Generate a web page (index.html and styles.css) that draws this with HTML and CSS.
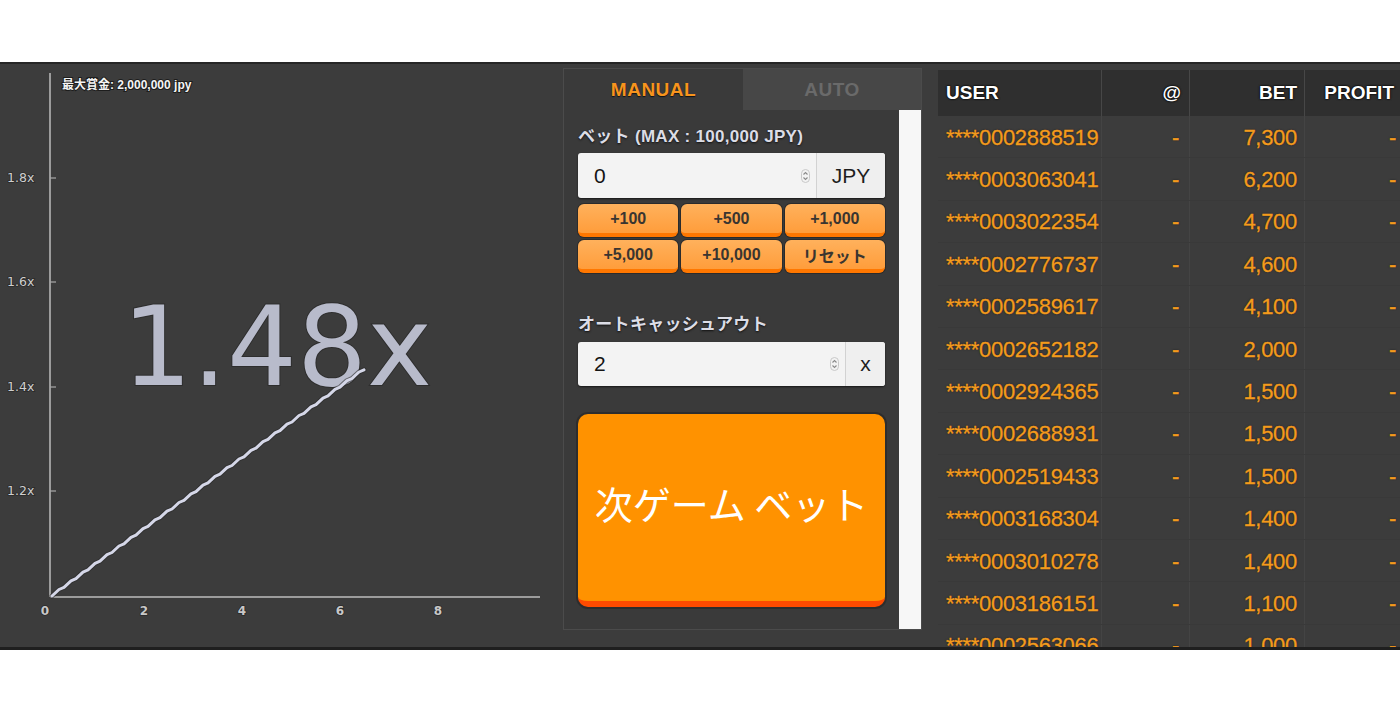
FILE: index.html
```html
<!DOCTYPE html>
<html lang="ja">
<head>
<meta charset="utf-8">
<title>Crash</title>
<link rel="stylesheet" href="styles.css">
</head>
<body>
<div class="app">
  <div class="chart">
    <svg width="560" height="583" viewBox="0 0 560 583">
      <text class="cap" x="62" y="25">最大賞金: 2,000,000 jpy</text>
      <line class="axis" x1="50" y1="9" x2="50" y2="533"/>
      <line class="axis" x1="50" y1="533" x2="540" y2="533"/>
      <line class="tick" x1="50" y1="114" x2="56" y2="114"/>
      <line class="tick" x1="50" y1="218" x2="56" y2="218"/>
      <line class="tick" x1="50" y1="323" x2="56" y2="323"/>
      <line class="tick" x1="50" y1="427" x2="56" y2="427"/>
      <text class="lbl" x="7" y="118">1.8x</text>
      <text class="lbl" x="7" y="222">1.6x</text>
      <text class="lbl" x="7" y="327">1.4x</text>
      <text class="lbl" x="7" y="431">1.2x</text>
      <text class="lbl mid" x="45" y="551">0</text>
      <text class="lbl mid" x="144" y="551">2</text>
      <text class="lbl mid" x="242" y="551">4</text>
      <text class="lbl mid" x="340" y="551">6</text>
      <text class="lbl mid" x="438" y="551">8</text>
      <text class="big" x="122" y="321">1.48x</text>
      <path class="curve-halo" d="M52 532 l7 -6.5 l5 -2.2 l7 -6.5 l5 -2.2 l7 -6.5 l5 -2.2 l7 -6.5 l5 -2.2 l7 -6.5 l5 -2.2 l7 -6.5 l5 -2.2 l7 -6.5 l5 -2.2 l7 -6.5 l5 -2.2 l7 -6.5 l5 -2.2 l7 -6.5 l5 -2.2 l7 -6.5 l5 -2.2 l7 -6.5 l5 -2.2 l7 -6.5 l5 -2.2 l7 -6.5 l5 -2.2 l7 -6.5 l5 -2.2 l7 -6.5 l5 -2.2 l7 -6.5 l5 -2.2 l7 -6.5 l5 -2.2 l7 -6.5 l5 -2.2 l7 -6.5 l5 -2.2 l7 -6.5 l5 -2.2 l7 -6.5 l5 -2.2 l7 -6.5 l5 -2.2 l7 -6.5 l5 -2.2 l7 -6.5 l5 -2.2 l7 -6.5 l5 -2.2"/>
      <path class="curve" d="M52 532 l7 -6.5 l5 -2.2 l7 -6.5 l5 -2.2 l7 -6.5 l5 -2.2 l7 -6.5 l5 -2.2 l7 -6.5 l5 -2.2 l7 -6.5 l5 -2.2 l7 -6.5 l5 -2.2 l7 -6.5 l5 -2.2 l7 -6.5 l5 -2.2 l7 -6.5 l5 -2.2 l7 -6.5 l5 -2.2 l7 -6.5 l5 -2.2 l7 -6.5 l5 -2.2 l7 -6.5 l5 -2.2 l7 -6.5 l5 -2.2 l7 -6.5 l5 -2.2 l7 -6.5 l5 -2.2 l7 -6.5 l5 -2.2 l7 -6.5 l5 -2.2 l7 -6.5 l5 -2.2 l7 -6.5 l5 -2.2 l7 -6.5 l5 -2.2 l7 -6.5 l5 -2.2 l7 -6.5 l5 -2.2 l7 -6.5 l5 -2.2 l7 -6.5 l5 -2.2"/>
    </svg>
  </div>

  <div class="panel">
    <div class="tabs">
      <div class="tab active">MANUAL</div>
      <div class="tab inactive">AUTO</div>
    </div>
    <div class="panel-body">
      <div class="form">
        <div class="label">ベット (MAX : 100,000 JPY)</div>
        <div class="field">
          <div class="value"><span>0</span>
            <svg class="spin" width="9" height="14" viewBox="0 0 9 14"><rect x="0.5" y="0.5" width="8" height="13" rx="4" fill="none" stroke="#c8c8c8"/><path d="M2.5 5.5 L4.5 3.5 L6.5 5.5 M2.5 8.5 L4.5 10.5 L6.5 8.5" fill="none" stroke="#8a8a8a" stroke-width="1.1"/></svg>
          </div>
          <div class="addon jpy">JPY</div>
        </div>
        <div class="quick">
          <div class="qbtn">+100</div>
          <div class="qbtn">+500</div>
          <div class="qbtn">+1,000</div>
          <div class="qbtn">+5,000</div>
          <div class="qbtn">+10,000</div>
          <div class="qbtn">リセット</div>
        </div>
        <div class="label label2">オートキャッシュアウト</div>
        <div class="field field2">
          <div class="value"><span>2</span>
            <svg class="spin" width="9" height="14" viewBox="0 0 9 14"><rect x="0.5" y="0.5" width="8" height="13" rx="4" fill="none" stroke="#c8c8c8"/><path d="M2.5 5.5 L4.5 3.5 L6.5 5.5 M2.5 8.5 L4.5 10.5 L6.5 8.5" fill="none" stroke="#8a8a8a" stroke-width="1.1"/></svg>
          </div>
          <div class="addon mult">x</div>
        </div>
        <div class="betbtn">次ゲーム ベット</div>
      </div>
      <div class="scroll"></div>
    </div>
  </div>

  <div class="board">
    <div class="row head">
      <div class="c user">USER</div>
      <div class="c at">@</div>
      <div class="c bet">BET</div>
      <div class="c profit">PROFIT</div>
    </div>
    <div class="row"><div class="c user">****0002888519</div><div class="c at">-</div><div class="c bet">7,300</div><div class="c profit">-</div></div>
    <div class="row"><div class="c user">****0003063041</div><div class="c at">-</div><div class="c bet">6,200</div><div class="c profit">-</div></div>
    <div class="row"><div class="c user">****0003022354</div><div class="c at">-</div><div class="c bet">4,700</div><div class="c profit">-</div></div>
    <div class="row"><div class="c user">****0002776737</div><div class="c at">-</div><div class="c bet">4,600</div><div class="c profit">-</div></div>
    <div class="row"><div class="c user">****0002589617</div><div class="c at">-</div><div class="c bet">4,100</div><div class="c profit">-</div></div>
    <div class="row"><div class="c user">****0002652182</div><div class="c at">-</div><div class="c bet">2,000</div><div class="c profit">-</div></div>
    <div class="row"><div class="c user">****0002924365</div><div class="c at">-</div><div class="c bet">1,500</div><div class="c profit">-</div></div>
    <div class="row"><div class="c user">****0002688931</div><div class="c at">-</div><div class="c bet">1,500</div><div class="c profit">-</div></div>
    <div class="row"><div class="c user">****0002519433</div><div class="c at">-</div><div class="c bet">1,500</div><div class="c profit">-</div></div>
    <div class="row"><div class="c user">****0003168304</div><div class="c at">-</div><div class="c bet">1,400</div><div class="c profit">-</div></div>
    <div class="row"><div class="c user">****0003010278</div><div class="c at">-</div><div class="c bet">1,400</div><div class="c profit">-</div></div>
    <div class="row"><div class="c user">****0003186151</div><div class="c at">-</div><div class="c bet">1,100</div><div class="c profit">-</div></div>
    <div class="row"><div class="c user">****0002563066</div><div class="c at">-</div><div class="c bet">1,000</div><div class="c profit">-</div></div>
  </div>
</div>
</body>
</html>
```

FILE: styles.css
```css
html, body {
  margin: 0;
  padding: 0;
  background: #ffffff;
  font-family: "Liberation Sans", "Noto Sans CJK JP", sans-serif;
}

.app {
  margin-top: 62px;
  height: 588px;
  box-sizing: border-box;
  border-top: 2px solid #262626;
  border-bottom: 3px solid #1f1f1f;
  background: #3c3c3c;
  display: flex;
  overflow: hidden;
}

/* ---------- chart ---------- */
.chart {
  width: 560px;
  flex: none;
}
.chart svg {
  display: block;
}
.axis {
  stroke: #9c9c9c;
  stroke-width: 2;
}
.tick {
  stroke: #a8a8a8;
  stroke-width: 1.2;
}
.lbl {
  font-family: "DejaVu Sans", sans-serif;
  font-size: 12.5px;
  fill: #cfcfcf;
  paint-order: stroke;
  stroke: #2a2a2a;
  stroke-width: 1.5px;
}
.lbl.mid {
  text-anchor: middle;
  font-weight: bold;
  font-size: 12px;
  fill: #c8c8c8;
}
.cap {
  font-family: "Liberation Sans", "Noto Sans CJK JP", sans-serif;
  font-size: 12px;
  font-weight: bold;
  fill: #f4f4f4;
  paint-order: stroke;
  stroke: #1d1d1d;
  stroke-width: 2px;
}
.big {
  font-family: "DejaVu Sans", sans-serif;
  font-size: 110px;
  fill: #b8bbcb;
  paint-order: stroke;
  stroke: #2e2e2e;
  stroke-width: 2px;
}
.curve-halo {
  fill: none;
  stroke: #2c2c2c;
  stroke-width: 5;
  stroke-linejoin: round;
  stroke-linecap: round;
  opacity: 0.6;
}
.curve {
  fill: none;
  stroke: #d5d7e8;
  stroke-width: 3;
  stroke-linejoin: round;
  stroke-linecap: round;
}

/* ---------- panel ---------- */
.panel {
  flex: none;
  width: 359px;
  height: 562px;
  box-sizing: border-box;
  margin: 4px 0 0 3px;
  border: 1px solid #4b4b4b;
  background: #3a3a3a;
  display: flex;
  flex-direction: column;
}
.tabs {
  display: flex;
  height: 41px;
  flex: none;
}
.tab {
  display: flex;
  align-items: center;
  justify-content: center;
  font-weight: bold;
  font-size: 19px;
  letter-spacing: 0.5px;
}
.tab.active {
  width: 179px;
  color: #f7941d;
  text-shadow: 0 1px 1px #121212;
}
.tab.inactive {
  flex: 1;
  background: #474747;
  color: #6a6a6a;
}
.panel-body {
  flex: 1;
  display: flex;
}
.form {
  flex: 1;
  padding: 17px 14px 0 14px;
  display: flex;
  flex-direction: column;
}
.scroll {
  width: 22px;
  flex: none;
  background: #f7f7f7;
}
.label {
  font-size: 17px;
  font-weight: bold;
  line-height: 20px;
  letter-spacing: 0.3px;
  color: #dcdde6;
  text-shadow: 0 1px 2px #111;
}
.label2 {
  margin-top: 42px;
}
.field {
  margin-top: 6px;
  height: 45px;
  display: flex;
  background: #f3f3f3;
  border-radius: 3px;
  box-shadow: 0 1px 2px rgba(0, 0, 0, 0.6);
}
.field2 {
  margin-top: 7px;
  height: 44px;
}
.value {
  flex: 1;
  display: flex;
  align-items: center;
  justify-content: space-between;
  padding: 0 6px 0 16px;
  font-size: 21px;
  color: #141414;
}
.spin {
  display: block;
}
.addon {
  border-left: 1px solid #d2d2d2;
  display: flex;
  align-items: center;
  justify-content: center;
  font-size: 21px;
  color: #1e1e1e;
  background: #efefef;
  border-radius: 0 3px 3px 0;
}
.addon.jpy {
  width: 68px;
}
.addon.mult {
  width: 39px;
}
.quick {
  margin-top: 6px;
  display: grid;
  grid-template-columns: repeat(3, 1fr);
  gap: 3px;
}
.qbtn {
  height: 33px;
  box-sizing: border-box;
  border-radius: 6px;
  border-bottom: 4px solid #ff7700;
  background: linear-gradient(#ffb15c, #ff9d3b);
  box-shadow: 0 0 0 1px #2b2b2b;
  display: flex;
  align-items: center;
  justify-content: center;
  font-size: 16px;
  font-weight: bold;
  color: #3a3530;
}
.betbtn {
  margin-top: 28px;
  height: 193px;
  box-sizing: border-box;
  padding-bottom: 10px;
  border-radius: 10px;
  background: #ff9200;
  border-bottom: 6px solid #ff4b00;
  box-shadow: 0 0 0 2px #2d2d2d;
  display: flex;
  align-items: center;
  justify-content: center;
  font-family: "Noto Sans CJK JP", sans-serif;
  font-size: 38px;
  font-weight: 400;
  color: #ffffff;
}

/* ---------- board ---------- */
.board {
  flex: 1;
  min-width: 0;
  margin: 6px 0 0 16px;
  overflow: hidden;
}
.row {
  display: grid;
  grid-template-columns: 164px 88px 115px 95px;
  height: 42.4px;
  border-bottom: 1px solid #393939;
  box-sizing: border-box;
}
.row.head {
  height: 46px;
  background: #2f2f2f;
  border-bottom: none;
}
.c {
  display: flex;
  align-items: center;
  padding-top: 2px;
  border-right: 1px solid #444;
  font-size: 22px;
  letter-spacing: -0.3px;
  color: #f49b1c;
  -webkit-text-stroke: 0.3px #f49b1c;
  text-shadow: 0 0 2px #1a1a1a;
}
.c.profit {
  border-right: none;
}
.c.user {
  padding-left: 8px;
}
.c.at {
  justify-content: flex-end;
  padding-right: 10px;
}
.c.bet {
  justify-content: flex-end;
  padding-right: 7px;
}
.c.profit {
  justify-content: flex-end;
  padding-right: 4px;
}
.head .c {
  padding-top: 0;
  font-size: 19px;
  font-weight: bold;
  letter-spacing: 0;
  color: #ffffff;
  -webkit-text-stroke: 0;
  text-shadow: 0 0 2px #000, 0 0 2px #000;
  border-right-color: #474747;
}
.head .c.at {
  padding-right: 8px;
}
.head .c.profit {
  padding-right: 6px;
}
```
